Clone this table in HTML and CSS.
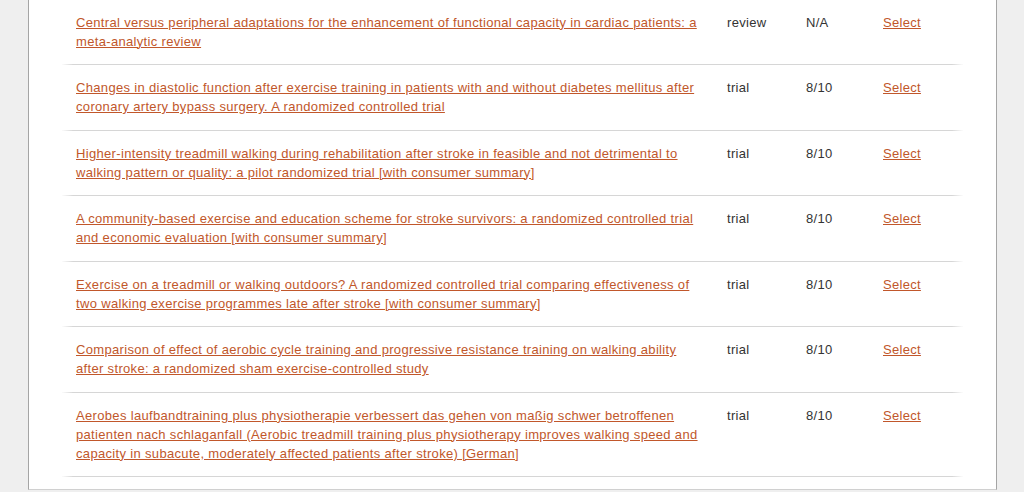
FILE: index.html
```html
<!DOCTYPE html>
<html lang="en">
<head>
<meta charset="utf-8">
<title>Search results</title>
<link rel="stylesheet" href="styles.css">
</head>
<body>
<div class="page">
  <div class="results">
    <div class="row">
      <div class="title"><a href="#">Central versus peripheral adaptations for the enhancement of functional capacity in cardiac patients: a meta-analytic review</a></div>
      <div class="type">review</div>
      <div class="score">N/A</div>
      <div class="action"><a href="#">Select</a></div>
    </div>
    <div class="row">
      <div class="title"><a href="#">Changes in diastolic function after exercise training in patients with and without diabetes mellitus after coronary artery bypass surgery. A randomized controlled trial</a></div>
      <div class="type">trial</div>
      <div class="score">8/10</div>
      <div class="action"><a href="#">Select</a></div>
    </div>
    <div class="row">
      <div class="title"><a href="#">Higher-intensity treadmill walking during rehabilitation after stroke in feasible and not detrimental to walking pattern or quality: a pilot randomized trial [with consumer summary]</a></div>
      <div class="type">trial</div>
      <div class="score">8/10</div>
      <div class="action"><a href="#">Select</a></div>
    </div>
    <div class="row">
      <div class="title"><a href="#">A community-based exercise and education scheme for stroke survivors: a randomized controlled trial and economic evaluation [with consumer summary]</a></div>
      <div class="type">trial</div>
      <div class="score">8/10</div>
      <div class="action"><a href="#">Select</a></div>
    </div>
    <div class="row">
      <div class="title"><a href="#">Exercise on a treadmill or walking outdoors? A randomized controlled trial comparing effectiveness of two walking exercise programmes late after stroke [with consumer summary]</a></div>
      <div class="type">trial</div>
      <div class="score">8/10</div>
      <div class="action"><a href="#">Select</a></div>
    </div>
    <div class="row">
      <div class="title"><a href="#">Comparison of effect of aerobic cycle training and progressive resistance training on walking ability after stroke: a randomized sham exercise-controlled study</a></div>
      <div class="type">trial</div>
      <div class="score">8/10</div>
      <div class="action"><a href="#">Select</a></div>
    </div>
    <div class="row">
      <div class="title"><a href="#">Aerobes laufbandtraining plus physiotherapie verbessert das gehen von maßig schwer betroffenen patienten nach schlaganfall (Aerobic treadmill training plus physiotherapy improves walking speed and capacity in subacute, moderately affected patients after stroke) [German]</a></div>
      <div class="type">trial</div>
      <div class="score">8/10</div>
      <div class="action"><a href="#">Select</a></div>
    </div>
  </div>
</div>
</body>
</html>
```

FILE: styles.css
```css
html, body {
  margin: 0;
  padding: 0;
}
body {
  background: #efefef;
  font-family: "Liberation Sans", Arial, sans-serif;
  font-size: 13px;
  line-height: 19px;
  color: #333;
}
.page {
  margin: -0.5px 0 0 28px;
  width: 969px;
  box-sizing: border-box;
  background: #fff;
  border-left: 1px solid #a5a5a5;
  border-right: 1px solid #a5a5a5;
  border-bottom: 1px solid #d0d0d0;
  padding: 0 33px 12px;
}
.results {
  display: flex;
  flex-direction: column;
}
.row {
  display: grid;
  grid-template-columns: 665px 79px 77px 1fr;
  padding: 13px 0 13.5px;
  border-bottom: 1px solid #d6d6d6;
  border-image: linear-gradient(to right, rgba(214,214,214,0), #d6d6d6 12px, #d6d6d6 calc(100% - 12px), rgba(214,214,214,0)) 1;
}
.title {
  padding: 0 23px 0 14px;
  letter-spacing: 0.33px;
}
.type, .score, .action {
  letter-spacing: 0.3px;
}
a {
  color: #c1572b;
  text-decoration: underline;
}
```
